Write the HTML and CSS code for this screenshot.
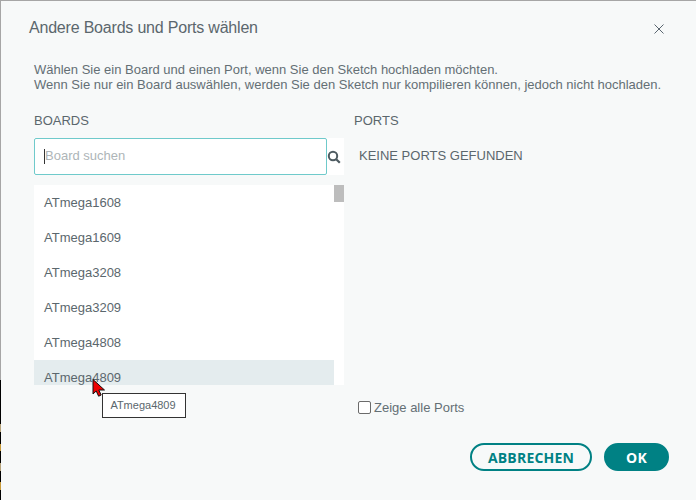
FILE: index.html
```html
<!DOCTYPE html>
<html lang="de">
<head>
<meta charset="utf-8">
<title>Andere Boards und Ports wählen</title>
<link rel="stylesheet" href="styles.css">
</head>
<body>
<div class="dialog">
  <header class="head">
    <h1 class="title">Andere Boards und Ports wählen</h1>
    <svg class="close" width="10" height="10" viewBox="0 0 10 10"><path d="M.5.5l9 9M9.5.5l-9 9" stroke="#5a6670" fill="none"/></svg>
  </header>
  <p class="intro">Wählen Sie ein Board und einen Port, wenn Sie den Sketch hochladen möchten.<br>Wenn Sie nur ein Board auswählen, werden Sie den Sketch nur kompilieren können, jedoch nicht hochladen.</p>
  <div class="columns">
    <section class="boards">
      <div class="label">BOARDS</div>
      <div class="search">
        <div class="input"><span class="caret"></span><span class="placeholder">Board suchen</span></div>
        <svg class="mag" width="14" height="14" viewBox="0 0 14 14"><circle cx="6" cy="6" r="4.2" fill="none" stroke="#4e5b61" stroke-width="2"/><path d="M9.2 9.2l3.6 3.6" stroke="#4e5b61" stroke-width="2.2"/></svg>
      </div>
      <div class="list">
        <div class="rows">
          <div class="row">ATmega1608</div>
          <div class="row">ATmega1609</div>
          <div class="row">ATmega3208</div>
          <div class="row">ATmega3209</div>
          <div class="row">ATmega4808</div>
          <div class="row active">ATmega4809</div>
        </div>
        <div class="track"><div class="thumb"></div></div>
      </div>
    </section>
    <section class="ports">
      <div class="label">PORTS</div>
      <div class="none">KEINE PORTS GEFUNDEN</div>
      <label class="check"><span class="box"></span>Zeige alle Ports</label>
    </section>
  </div>
  <footer class="actions">
    <button class="btn ghost">ABBRECHEN</button>
    <button class="btn solid">OK</button>
  </footer>
</div>
<div class="edge"></div>
<div class="tooltip">ATmega4809</div>
<svg class="cursor" width="16" height="20" viewBox="0 0 16 20"><path d="M1 .5v14.5l3.2-3 2.4 5.2 2.6-1.2-2.4-5H12.5z" fill="#ee0000" stroke="#111" stroke-width="1"/></svg>
</body>
</html>
```
FILE: styles.css
```css
* { box-sizing: border-box; }
html, body { margin: 0; height: 100%; }
body {
  width: 696px;
  height: 500px;
  overflow: hidden;
  position: relative;
  background: #f7f9f9;
  font-family: "Liberation Sans", Arial, sans-serif;
  color: #5b676d;
}
.dialog {
  height: 500px;
  border-top: 1px solid #a6a6a6;
  border-left: 1px solid #a6a6a6;
  padding: 0 0 0 33px;
  display: flex;
  flex-direction: column;
}
.edge {
  position: absolute;
  left: 0;
  top: 380px;
  width: 1px;
  height: 120px;
  background: linear-gradient(#000 0 44px, #b5a27a 44px 52px, #000 52px 64px, #c79a3a 64px 71px, #000 71px 83px, #b5a27a 83px 91px, #000 91px 102px, #c79a3a 102px 110px, #000 110px);
}
.head {
  height: 55px;
  margin-left: -5px;
  padding: 17px 32px 0 0;
  display: flex;
  justify-content: space-between;
  align-items: flex-start;
}
.title { margin: 0; font-size: 16px; line-height: 20px; font-weight: 400; letter-spacing: -.2px; color: #5b676d; }
.close { margin-top: 6px; }
.intro { margin: 6px 0 0; font-size: 13px; line-height: 15px; color: #646f75; white-space: nowrap; }
.columns { display: flex; margin-top: 20px; height: 321px; }
.boards { width: 310px; margin-right: 10px; }
.label { font-size: 13px; line-height: 15px; height: 26px; padding-top: 1px; color: #5b676d; }
.search { display: flex; align-items: center; background: #fff; height: 37px; }
.input {
  width: 293px;
  height: 37px;
  border: 1px solid #6fcacb;
  border-radius: 2px;
  background: #fff;
  padding-left: 9px;
  display: flex;
  align-items: center;
}
.caret { width: 1px; height: 15px; background: #333; }
.placeholder { font-size: 13px; color: #aeb5b8; margin-bottom: 2px; }
.list { display: flex; margin-top: 10px; height: 200px; background: #fff; overflow: hidden; }
.rows { flex: 1; }
.row { height: 35px; line-height: 35px; padding-left: 10px; font-size: 13px; color: #5b676d; }
.row.active { background: #e4ecee; }
.track { width: 10px; }
.thumb { height: 17px; background: #bdbdbd; }
.ports { flex: 1; display: flex; flex-direction: column; }
.none { font-size: 13px; line-height: 15px; margin: 10px 0 0 5px; }
.check { display: flex; align-items: center; font-size: 13px; line-height: 15px; margin: 237px 0 0 4px; color: #646f75; }
.box { width: 13px; height: 13px; border: 1px solid #6b6b6b; border-radius: 2px; background: #fff; margin-right: 3px; }
.actions { display: flex; justify-content: flex-end; gap: 12px; padding-right: 27px; margin-top: 10px; }
.btn {
  height: 28px;
  border-radius: 14px;
  font-family: "Open Sans", sans-serif;
  font-size: 14px;
  font-weight: 700;
  letter-spacing: .2px;
  padding: 0;
}
.ghost { width: 122px; background: transparent; border: 2px solid #008184; color: #008184; }
.solid { width: 65px; background: #008184; border: 2px solid #008184; color: #fff; }
.tooltip {
  position: absolute;
  left: 102px;
  top: 393px;
  width: 84px;
  height: 25px;
  border: 1px solid #333;
  background: #fff;
  font-size: 11px;
  line-height: 23px;
  padding-right: 2px;
  text-align: center;
  color: #5b676d;
}
.cursor { position: absolute; left: 92px; top: 379px; }
```
